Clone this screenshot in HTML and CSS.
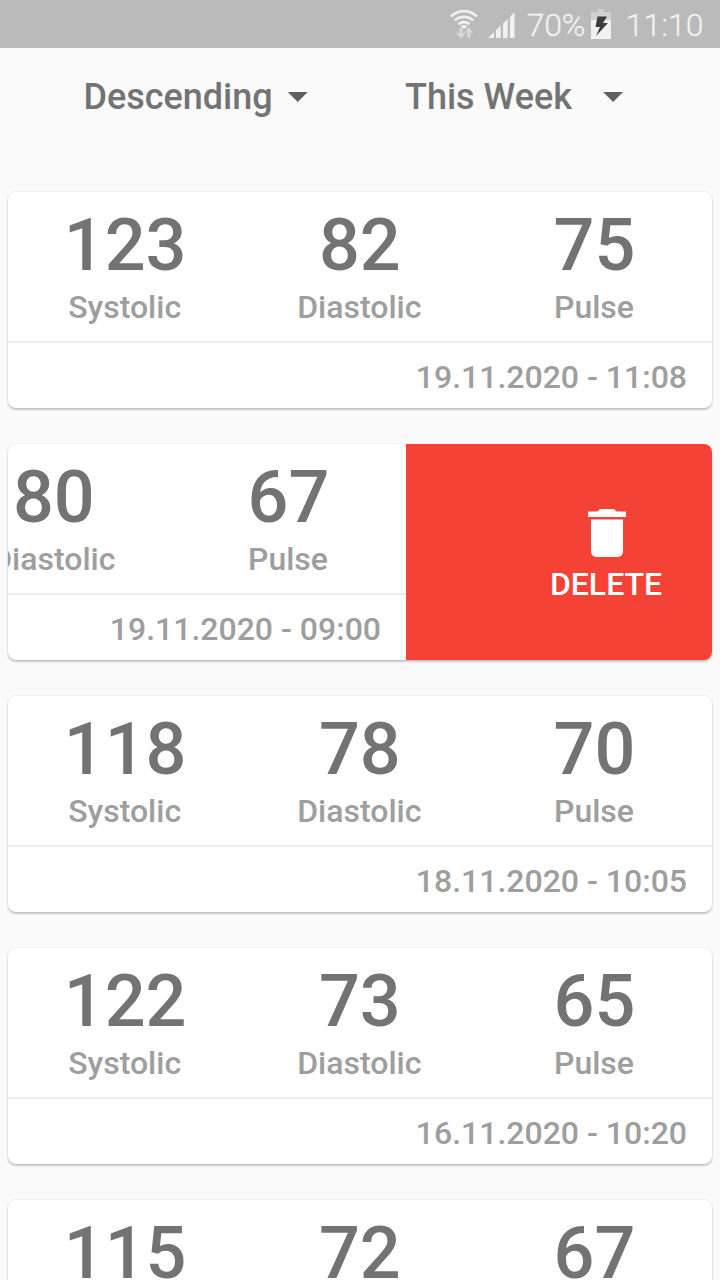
FILE: index.html
```html
<!DOCTYPE html>
<html lang="en">
<head>
<meta charset="utf-8">
<title>Blood Pressure</title>
<link rel="stylesheet" href="styles.css">
</head>
<body>
<header class="status">
<svg class="wifi" width="28" height="30" viewBox="0 0 28 30"><g fill="none" stroke="#f1f1f1" stroke-width="2.800"><path d="M1.200 7.500A18 18 0 0 1 26.800 7.500"/><path d="M4.800 11.500A13.500 13.500 0 0 1 23.200 11.500"/><path d="M8.500 15.200A8.500 8.500 0 0 1 19.500 15.200"/></g><path d="M10.500 17.500Q14 14.500 17.500 17.500L14 20z" fill="#f1f1f1"/><path d="M9.500 19h3v5h3L11 30l-4.500-6h3zM17.200 28.500v-5h-2.700L18.800 18l4.200 5.500h-2.500v5z" fill="#d8d8d8"/></svg>
<svg class="signal" width="27" height="26" viewBox="0 0 27 26"><path d="M0 26l6-6v6zM8 26v-8l4.700-4.500V26zM15 26V11.500L19.700 7v19zM22 26V5L26.500 0v26z" fill="#f1f1f1"/></svg>
<span class="percent">70%</span>
<svg class="battery" width="20" height="30" viewBox="0 0 20 30"><path d="M7 0h6v3h7v8H0V3h7z" fill="#d0d0d0"/><path d="M0 11h20v19H0z" fill="#f1f1f1"/><path d="M6.500 7.500H16L12 14h5L5 27l4-9H4.500z" fill="#3c3c3c"/></svg>
<span class="clock">11:10</span>
</header>
<nav class="filters">
<div class="filter sort"><span>Descending</span><i class="caret"></i></div>
<div class="filter range"><span>This Week</span><i class="caret"></i></div>
</nav>
<main class="list">
<article class="card"><div class="sheet"><div class="values"><div><b>123</b><span>Systolic</span></div><div><b>82</b><span>Diastolic</span></div><div><b>75</b><span>Pulse</span></div></div><time>19.11.2020 - 11:08</time></div></article>
<article class="card swiped"><div class="sheet"><div class="values"><div></div><div><b>80</b><span>Diastolic</span></div><div><b>67</b><span>Pulse</span></div></div><time>19.11.2020 - 09:00</time></div><button class="delete"><svg width="38" height="48" viewBox="0 0 38 48"><path d="M0 2.500h9.500L12 0h14l2.500 2.500H38V8H0zM3 10.500h32v32c0 3-2.500 5.500-5.500 5.500h-21C5.500 48 3 45.500 3 42.500z" fill="#fff"/></svg><span>DELETE</span></button></article>
<article class="card"><div class="sheet"><div class="values"><div><b>118</b><span>Systolic</span></div><div><b>78</b><span>Diastolic</span></div><div><b>70</b><span>Pulse</span></div></div><time>18.11.2020 - 10:05</time></div></article>
<article class="card"><div class="sheet"><div class="values"><div><b>122</b><span>Systolic</span></div><div><b>73</b><span>Diastolic</span></div><div><b>65</b><span>Pulse</span></div></div><time>16.11.2020 - 10:20</time></div></article>
<article class="card partial"><div class="sheet"><div class="values"><div><b>115</b></div><div><b>72</b></div><div><b>67</b></div></div></div></article>
</main>
</body>
</html>
```
FILE: styles.css
```css
* { box-sizing: border-box; }
body { margin: 0; width: 720px; height: 1280px; overflow: hidden; background: #fafafa; font-family: Roboto, sans-serif; font-weight: 500; color: #737373; }
.status { height: 48px; background: #bababa; display: flex; align-items: center; justify-content: flex-end; padding: 0 16.5px 0 0; color: #f1f1f1; font-size: 32px; line-height: 38px; font-weight: 300; -webkit-text-stroke: .3px #f1f1f1; }
.wifi { margin: 0 10px 0 0; }
.signal { margin: 1px 12px 0 0; }
.percent { margin: 1px 6px 0 0; letter-spacing: -.2px; }
.battery { margin: -1px 14.5px 0 0; }
.clock { margin: 1px 0 0; }
.filters { height: 144px; display: flex; padding: 28px 0 0 83.4px; font-size: 36px; line-height: 42px; }
.filter { display: flex; height: 42px; }
.sort { width: 321.6px; }
.sort .caret { margin-left: 15px; }
.range .caret { margin-left: 31px; }
.caret { margin-top: 16px; width: 20px; height: 10px; background: #616161; clip-path: polygon(0 0, 100% 0, 50% 100%); }
.list { padding: 0 8px; display: flex; flex-direction: column; gap: 36px; }
.card { height: 216px; flex: none; border-radius: 8px; background: #fff; overflow: hidden; display: flex; box-shadow: 0 2px 2px rgba(0,0,0,.2), 0 0 2px rgba(0,0,0,.12); }
.partial { height: 80px; border-radius: 8px 8px 0 0; }
.sheet { width: 704px; flex: none; }
.values { height: 151px; display: grid; grid-template-columns: repeat(3, 1fr); border-bottom: 2px solid #eee; text-align: center; }
.values b { display: block; height: 84px; margin-top: 12px; padding-right: .4px; font-size: 72px; line-height: 84px; font-weight: 500; }
.values span { display: block; margin-top: -1px; padding-right: 1.4px; font-size: 32px; line-height: 40px; color: #9e9e9e; }
.partial .values { height: 80px; border-bottom: 0; }
.partial b { height: 68px; }
time { display: block; padding: 0 25px; text-align: right; font-size: 32px; line-height: 69px; color: #9e9e9e; }
.swiped .sheet { margin-left: -306px; }
.delete { width: 306px; flex: none; border: 0; padding: 65px 0 0 95px; background: #f44336; color: #fff; font: 500 32px/38px Roboto, sans-serif; display: flex; flex-direction: column; align-items: center; gap: 8px; }
.delete span { padding-right: 1px; }
```
